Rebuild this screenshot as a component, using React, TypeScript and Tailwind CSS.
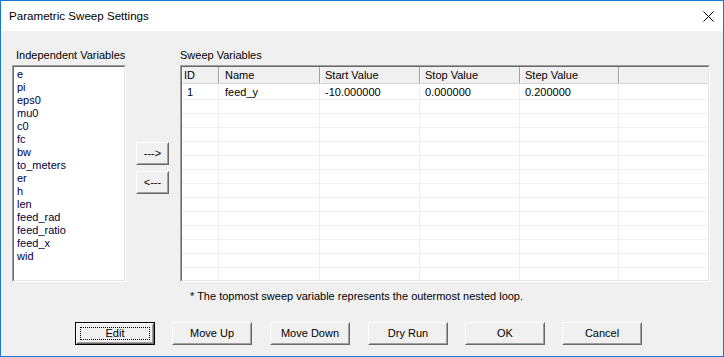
import React from 'react';

const variables = ['e', 'pi', 'eps0', 'mu0', 'c0', 'fc', 'bw', 'to_meters', 'er', 'h', 'len', 'feed_rad', 'feed_ratio', 'feed_x', 'wid'];

const columns = [
  { label: 'ID', w: 'w-[37px]', hp: 'pl-[2px]', bp: 'pl-[5px]' },
  { label: 'Name', w: 'w-[101px]', hp: 'pl-[6px]', bp: 'pl-[6px]' },
  { label: 'Start Value', w: 'w-[100px]', hp: 'pl-[5px]', bp: 'pl-[5px]' },
  { label: 'Stop Value', w: 'w-[100px]', hp: 'pl-[5px]', bp: 'pl-[5px]' },
  { label: 'Step Value', w: 'w-[99px]', hp: 'pl-[5px]', bp: 'pl-[5px]' },
];

const rows = [['1', 'feed_y', '-10.000000', '0.000000', '0.200000']];

function Sunken({ className, children }: { className: string; children: React.ReactNode }) {
  return (
    <div className={`border border-t-[#a0a0a0] border-l-[#a0a0a0] border-b-white border-r-white ${className}`}>
      <div className="h-full w-full border border-t-[#696969] border-l-[#696969] border-b-[#e3e3e3] border-r-[#e3e3e3] bg-white overflow-hidden">
        {children}
      </div>
    </div>
  );
}

function Btn({ label, isDefault, className }: { label: string; isDefault?: boolean; className?: string }) {
  return (
    <div className={`h-[23px] shrink-0 ${isDefault ? 'border border-black' : ''} ${className ?? ''}`}>
      <div className="h-full w-full border border-t-white border-l-white border-b-[#696969] border-r-[#696969]">
        <div className="h-full w-full border border-t-[#f0f0f0] border-l-[#f0f0f0] border-b-[#a0a0a0] border-r-[#a0a0a0] bg-[#f0f0f0] flex items-center justify-center p-[2px]">
          <div className={`h-full w-full flex items-center justify-center text-[11px] text-black ${isDefault ? 'outline outline-1 outline-dotted outline-black -outline-offset-1' : ''}`}>
            {label}
          </div>
        </div>
      </div>
    </div>
  );
}

export default function App() {
  const emptyRows = Array.from({ length: 14 });

  return (
    <div className="w-[724px] h-[357px] flex flex-col border border-[#1979ca] overflow-hidden font-['Liberation_Sans',Arial,sans-serif] text-black">
      {/* Title bar */}
      <div className="h-[30px] bg-white flex items-center pl-[8px] pr-[9px] shrink-0">
        <span className="text-[11.6px]">Parametric Sweep Settings</span>
        <svg className="ml-auto" width="11" height="11" viewBox="0 0 11 11">
          <path d="M0.5 0.5 L10.5 10.5 M10.5 0.5 L0.5 10.5" stroke="#000" strokeWidth="1" />
        </svg>
      </div>

      <div className="flex-1 bg-[#f0f0f0] flex flex-col text-[11px] leading-[13px]">
        <div className="flex pt-[18px] pl-[11px]">
          {/* Independent variables */}
          <div className="w-[114px] flex flex-col">
            <div className="pl-[4px] h-[13px] mb-[3px]">Independent Variables</div>
            <Sunken className="h-[217px]">
              <div className="pl-[3px] pt-[1px] text-[#000040]">
                {variables.map(v => (
                  <div key={v} className="h-[13px] leading-[13px]">{v}</div>
                ))}
              </div>
            </Sunken>
          </div>

          {/* Move buttons */}
          <div className="ml-[10px] flex flex-col gap-[6px] pt-[93px]">
            <Btn label="--->" className="w-[33px]" />
            <Btn label="<---" className="w-[33px]" />
          </div>

          {/* Sweep variables */}
          <div className="ml-[11px] w-[530px] flex flex-col">
            <div className="h-[13px] mb-[3px]">Sweep Variables</div>
            <Sunken className="h-[217px]">
              <div className="flex h-[17px] bg-[#f0f0f0] border-b border-[#d5d5d5]">
                {columns.map(c => (
                  <div key={c.label} className={`${c.w} ${c.hp} shrink-0 flex items-center pt-[1px] border-r border-[#a0a0a0] shadow-[inset_1px_0_0_#ffffff]`}>
                    {c.label}
                  </div>
                ))}
                <div className="flex-1 shadow-[inset_1px_0_0_#ffffff]" />
              </div>
              {rows.map((r, i) => (
                <div key={i} className="flex h-[16px] border-b border-[#f0f0f0]">
                  {columns.map((c, j) => (
                    <div key={c.label} className={`${c.w} ${c.bp} shrink-0 flex items-center pt-[2px] border-r border-[#f0f0f0]`}>
                      {r[j]}
                    </div>
                  ))}
                  <div className="flex-1" />
                </div>
              ))}
              {emptyRows.map((_, i) => (
                <div key={i} className="flex h-[14px] border-b border-[#f0f0f0]">
                  {columns.map(c => (
                    <div key={c.label} className={`${c.w} shrink-0 border-r border-[#f0f0f0]`} />
                  ))}
                  <div className="flex-1" />
                </div>
              ))}
            </Sunken>
            <div className="mt-[8px] pl-[10px]">* The topmost sweep variable represents the outermost nested loop.</div>
          </div>
        </div>

        {/* Bottom buttons */}
        <div className="flex pl-[74px] mt-[19px]">
          <Btn label="Edit" isDefault className="w-[80px]" />
          <Btn label="Move Up" className="w-[80px] ml-[17px]" />
          <Btn label="Move Down" className="w-[80px] ml-[18px]" />
          <Btn label="Dry Run" className="w-[80px] ml-[18px]" />
          <Btn label="OK" className="w-[80px] ml-[17px]" />
          <Btn label="Cancel" className="w-[80px] ml-[17px]" />
        </div>
      </div>
    </div>
  );
}
